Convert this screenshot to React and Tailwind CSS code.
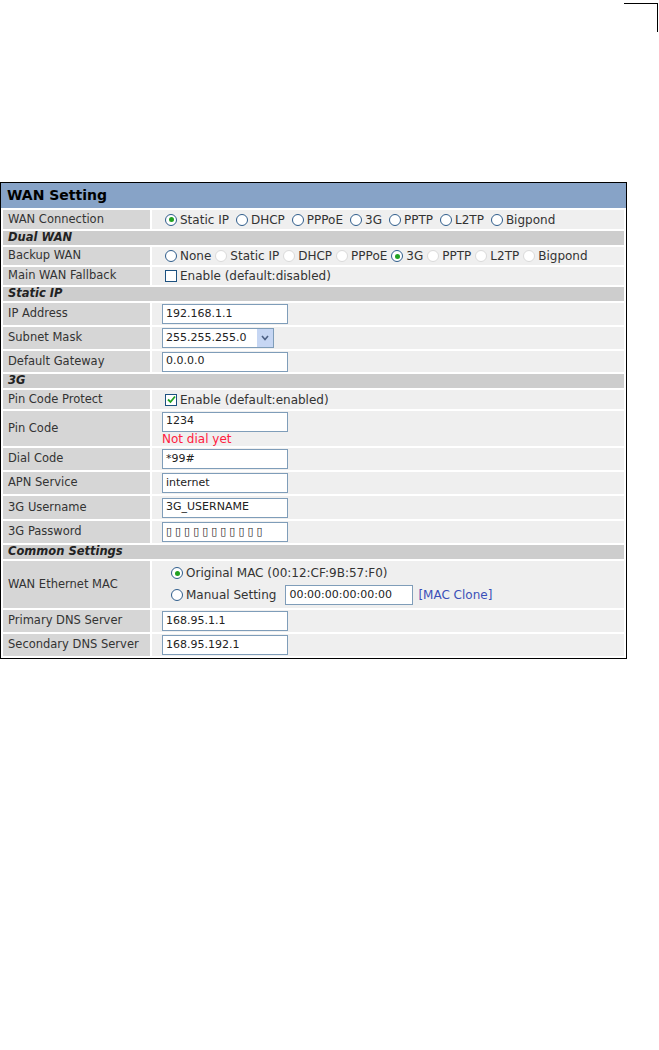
import React from "react";

const font = { fontFamily: '"DejaVu Sans", Verdana, sans-serif' };

const Radio = ({ checked, disabled }) => (
  <span
    className={`inline-flex items-center justify-center w-[12px] h-[12px] rounded-full border bg-white shrink-0 ${
      disabled ? "border-[#dadada]" : "border-[#2f5d8c]"
    }`}
  >
    {checked && <span className="w-[5px] h-[5px] rounded-full bg-[#21a121]" />}
  </span>
);

const Check = ({ checked }) => (
  <span className="inline-flex items-center justify-center w-[12px] h-[12px] border border-[#1c5180] bg-white shrink-0">
    {checked && (
      <svg width="9" height="9" viewBox="0 0 9 9">
        <path d="M1 4.5 L3.5 7 L8 1.5" stroke="#21a121" strokeWidth="1.8" fill="none" />
      </svg>
    )}
  </span>
);

const Input = ({ value, w = "w-[126px]" }) => (
  <div className={`${w} h-[20px] border border-[#7f9db9] bg-white flex items-center px-[3px] text-[11px] text-[#222]`}>
    {value}
  </div>
);

const Row = ({ label, h, children, pl = "pl-[10px]" }) => (
  <div className={`flex gap-[2px] ${h}`}>
    <div className="w-[147px] shrink-0 bg-[#d6d6d6] pl-[5px] flex items-center text-[11.5px] text-[#333]">{label}</div>
    <div className={`flex-1 bg-[#efefef] flex items-center text-[12px] text-[#333] ${pl}`}>{children}</div>
  </div>
);

const Section = ({ title }) => (
  <div className="h-[14px] bg-[#cdcdcd] pl-[5px] flex items-center font-bold italic text-[11.5px] text-[#222]">{title}</div>
);

const RadioItem = ({ label, checked, disabled }) => (
  <span className="inline-flex items-center gap-[3px]">
    <Radio checked={checked} disabled={disabled} />
    {label && <span>{label}</span>}
  </span>
);

export default function App() {
  const wanOpts = ["Static IP", "DHCP", "PPPoE", "3G", "PPTP", "L2TP", "Bigpond"];
  const backup = [
    ["None", false, false],
    ["Static IP", false, true],
    ["DHCP", false, true],
    ["PPPoE", false, true],
    ["3G", true, false],
    ["PPTP", false, true],
    ["L2TP", false, true],
    ["Bigpond", false, true],
  ];
  return (
    <div className="w-[659px] h-[1050px] bg-white" style={font}>
      <div className="flex justify-end pr-[1px] pt-[3px]">
        <div className="w-[34px] h-[29px] border-t-[1.5px] border-r-[1.5px] border-black" />
      </div>

      <div className="mt-[150px] w-[627px] border border-black">
        <div className="h-[25px] bg-[#87a3c7] pl-[6px] flex items-center font-bold text-[14px] text-black">
          WAN Setting
        </div>
        <div className="flex flex-col gap-[2px] pt-[2px] px-[2px] pb-[2px]">
          <Row label="WAN Connection" h="h-[19px]" pl="pl-[13px]">
            <div className="flex items-center gap-[7px]">
              {wanOpts.map((o, i) => (
                <RadioItem key={o} label={o} checked={i === 0} />
              ))}
            </div>
          </Row>
          <Section title="Dual WAN" />
          <Row label="Backup WAN" h="h-[18px]" pl="pl-[13px]">
            <div className="flex items-center gap-[4px]">
              {backup.map(([l, c, d]) => (
                <RadioItem key={l} label={l} checked={c} disabled={d} />
              ))}
            </div>
          </Row>
          <Row label="Main WAN Fallback" h="h-[18px]" pl="pl-[13px]">
            <span className="inline-flex items-center gap-[3px]">
              <Check />
              <span>Enable (default:disabled)</span>
            </span>
          </Row>
          <Section title="Static IP" />
          <Row label="IP Address" h="h-[22px]">
            <Input value="192.168.1.1" />
          </Row>
          <Row label="Subnet Mask" h="h-[22px]">
            <div className="w-[112px] h-[20px] border border-[#7f9db9] bg-white flex items-center text-[11px] text-[#222]">
              <span className="flex-1 px-[3px]">255.255.255.0</span>
              <span className="w-[16px] h-[18px] bg-[#c6d6f3] flex items-center justify-center">
                <svg width="8" height="6" viewBox="0 0 8 6">
                  <path d="M1 1 L4 4.5 L7 1" stroke="#4d6185" strokeWidth="1.6" fill="none" />
                </svg>
              </span>
            </div>
          </Row>
          <Row label="Default Gateway" h="h-[21px]">
            <Input value="0.0.0.0" />
          </Row>
          <Section title="3G" />
          <Row label="Pin Code Protect" h="h-[19px]" pl="pl-[13px]">
            <span className="inline-flex items-center gap-[3px]">
              <Check checked />
              <span>Enable (default:enabled)</span>
            </span>
          </Row>
          <Row label="Pin Code" h="h-[35px]">
            <div className="flex flex-col">
              <Input value="1234" />
              <span className="text-[#ff2040] leading-[13px] mt-[1px]">Not dial yet</span>
            </div>
          </Row>
          <Row label="Dial Code" h="h-[22px]">
            <Input value="*99#" />
          </Row>
          <Row label="APN Service" h="h-[22px]">
            <Input value="internet" />
          </Row>
          <Row label="3G Username" h="h-[23px]">
            <Input value="3G_USERNAME" />
          </Row>
          <Row label="3G Password" h="h-[22px]">
            <Input value={<span className="tracking-[3px]">▯▯▯▯▯▯▯▯▯▯▯</span>} />
          </Row>
          <Section title="Common Settings" />
          <Row label="WAN Ethernet MAC" h="h-[47px]" pl="pl-[19px]">
            <div className="flex flex-col gap-[3px]">
              <RadioItem label="Original MAC (00:12:CF:9B:57:F0)" checked />
              <div className="flex items-center">
                <RadioItem label="Manual Setting" />
                <div className="ml-[9px]">
                  <Input value="00:00:00:00:00:00" w="w-[128px]" />
                </div>
                <span className="ml-[5px] text-[#3b4fb8]">[MAC Clone]</span>
              </div>
            </div>
          </Row>
          <Row label="Primary DNS Server" h="h-[22px]">
            <Input value="168.95.1.1" />
          </Row>
          <Row label="Secondary DNS Server" h="h-[22px]">
            <Input value="168.95.192.1" />
          </Row>
        </div>
      </div>
    </div>
  );
}
